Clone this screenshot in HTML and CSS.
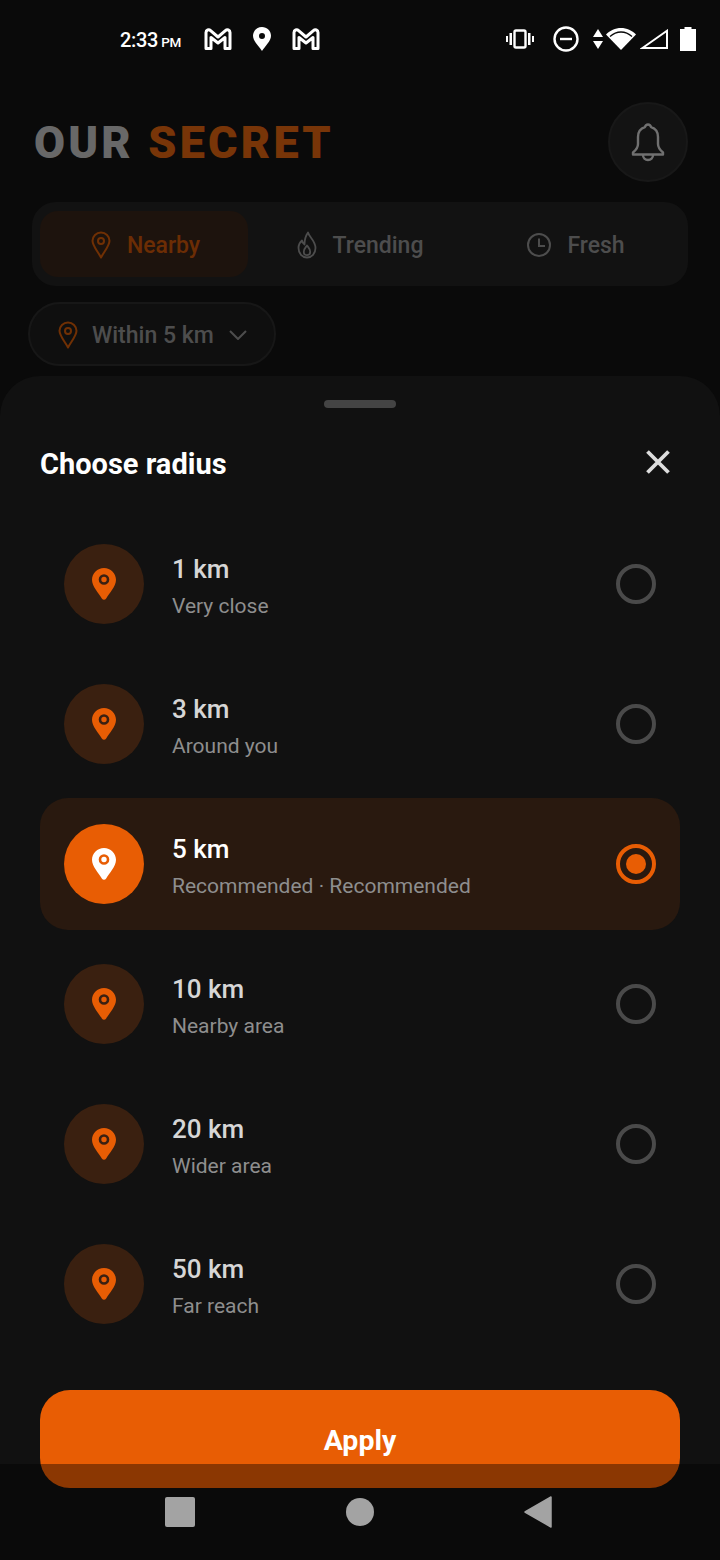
FILE: index.html
```html
<!DOCTYPE html>
<html lang="en">
<head>
  <meta charset="UTF-8" />
  <meta name="viewport" content="width=device-width, initial-scale=1.0" />
  <title>Choose radius</title>
  <link rel="stylesheet" href="styles.css">
</head>
<body>
  <svg class="defs" aria-hidden="true">
    <symbol id="pin-solid" viewBox="0 0 24 32">
      <path fill="currentColor" d="M12 0C5.400 0 0 5.200 0 11.800c0 6.600 6.600 13.400 10 18.900.9 1.500 3.100 1.500 4 0 3.400-5.500 10-12.300 10-18.900C24 5.200 18.600 0 12 0z"/>
      <circle cx="12" cy="11.500" r="4" fill="none" stroke="var(--ring)" stroke-width="2.600"/>
    </symbol>
    <symbol id="pin-line" viewBox="0 0 20 28">
      <path fill="none" stroke="currentColor" stroke-width="2" stroke-linejoin="round" d="M10 1.500c-4.700 0-8.500 3.700-8.500 8.300 0 5 5.400 10.800 8.500 16.700 3.100-5.900 8.500-11.700 8.500-16.700 0-4.600-3.800-8.300-8.500-8.300z"/>
      <circle cx="10" cy="10" r="3" fill="none" stroke="currentColor" stroke-width="2"/>
    </symbol>
    <symbol id="gmail" viewBox="0 0 28 22">
      <path fill="none" stroke="currentColor" stroke-width="3" stroke-linejoin="round" d="M2 4.500C2 2 4.800 1 6.600 2.600L14 9l7.400-6.400C23.200 1 26 2 26 4.500V20.500h-5V9.500L14 15 7 9.500v11H2z"/>
    </symbol>
  </svg>

  <div class="app">
    <div class="status">
      <div class="status-left">
        <span class="time">2:33<small>PM</small></span>
        <svg class="ic-gmail"><use href="#gmail"/></svg>
        <svg class="ic-loc" viewBox="0 0 18 24">
          <path fill="#fff" fill-rule="evenodd" d="M9 0C4 0 0 3.900 0 8.800 0 14 6 19.500 9 24c3-4.500 9-10 9-15.200C18 3.900 14 0 9 0zm0 6a3 3 0 1 1 0 6 3 3 0 0 1 0-6z"/>
        </svg>
        <svg class="ic-gmail"><use href="#gmail"/></svg>
      </div>
      <div class="status-right">
        <svg class="ic-vib" viewBox="0 0 28 20">
          <rect x="8.500" y="1.500" width="11" height="17" rx="1.500" fill="none" stroke="#fff" stroke-width="2.400"/>
          <path fill="#fff" d="M3.500 4h2.500v12H3.500zM22 4h2.500v12H22zM0 7h2v6H0zM26 7h2v6h-2z"/>
        </svg>
        <svg class="ic-dnd" viewBox="0 0 26 26">
          <circle cx="13" cy="13" r="11.500" fill="none" stroke="#fff" stroke-width="2.400"/>
          <rect x="7" y="11.800" width="12" height="2.400" fill="#fff"/>
        </svg>
        <svg class="ic-arrows" viewBox="0 0 10 20">
          <path fill="#fff" d="M5 0l5 8H0zM0 12h10l-5 8z"/>
        </svg>
        <svg class="ic-wifi" viewBox="0 0 30 22">
          <path fill="#fff" d="M15 22L0 6.500C4 2.500 9.200 0 15 0s11 2.500 15 6.500z"/>
          <path fill="none" stroke="#0a0a0a" stroke-width="1.300" d="M4 8.500C7.200 5.600 11 4 15 4s7.800 1.600 11 4.500"/>
        </svg>
        <svg class="ic-signal" viewBox="0 0 28 20">
          <path fill="none" stroke="#fff" stroke-width="2" d="M2.500 19L27 1.800V19z"/>
        </svg>
        <svg class="ic-batt" viewBox="0 0 16 24">
          <path fill="#fff" d="M4.500 0h7v2H16v22H0V2h4.500z"/>
        </svg>
      </div>
    </div>

    <div class="behind">
      <header class="top">
        <h1 class="logo">OUR <span>SECRET</span></h1>
        <div class="bell">
          <svg width="36" height="40" viewBox="0 0 36 40" fill="none" stroke="currentColor" stroke-width="2.400" stroke-linejoin="round">
            <path d="M18 2.500c-1.700 0-2.700 1.300-3 2.600C10.200 6.500 8 10.500 8 15v7c0 3.500-2 6-5 8.500V32.500h30V30.500c-3-2.500-5-5-5-8.500v-7c0-4.500-2.200-8.500-7-9.900-.3-1.300-1.300-2.600-3-2.600z"/>
            <path d="M13 33c0 3 2.200 5 5 5s5-2 5-5"/>
          </svg>
        </div>
      </header>

      <nav class="tabs">
        <div class="tab active">
          <svg class="ic-tab-pin"><use href="#pin-line"/></svg>
          Nearby
        </div>
        <div class="tab">
          <svg class="ic-flame" viewBox="0 0 20 28" fill="none" stroke="currentColor" stroke-width="1.800" stroke-linejoin="round">
            <path d="M11 1.500c1 4.500 7.500 8 7.500 15.500 0 5.500-3.800 9.500-8.500 9.500s-8.500-4-8.500-9.500c0-3.500 1.800-6 3.500-7.500.3 2 1 3 2.500 4C7.500 9 8.500 5 11 1.500z"/>
            <path d="M10 14.500c-1.500 2-3.200 3.700-3.200 6.200 0 2 1.400 3.500 3.200 3.500s3.200-1.500 3.200-3.500c0-2.500-1.700-4.200-3.200-6.200z"/>
          </svg>
          Trending
        </div>
        <div class="tab">
          <svg class="ic-clock" viewBox="0 0 24 24" fill="none" stroke="currentColor" stroke-width="2">
            <circle cx="12" cy="12" r="11"/>
            <path d="M12 5.500V13h6"/>
          </svg>
          Fresh
        </div>
      </nav>

      <div class="chip">
        <svg class="ic-chip-pin"><use href="#pin-line"/></svg>
        <span>Within 5 km</span>
        <svg class="ic-chev" viewBox="0 0 18 10" fill="none" stroke="currentColor" stroke-width="2">
          <path d="M1 1l8 8 8-8"/>
        </svg>
      </div>
    </div>

    <div class="scrim"></div>

    <section class="sheet">
      <div class="handle"></div>
      <div class="sheet-head">
        <h2>Choose radius</h2>
        <svg class="ic-close" viewBox="0 0 24 24" stroke="#ddd" stroke-width="3.800">
          <path d="M1.500 1.500l21 21M22.500 1.500l-21 21"/>
        </svg>
      </div>

      <div class="list">
        <div class="row">
          <div class="badge"><svg class="ic-pin"><use href="#pin-solid"/></svg></div>
          <div class="row-text"><div class="km">1 km</div><div class="sub">Very close</div></div>
          <div class="radio"></div>
        </div>
        <div class="row">
          <div class="badge"><svg class="ic-pin"><use href="#pin-solid"/></svg></div>
          <div class="row-text"><div class="km">3 km</div><div class="sub">Around you</div></div>
          <div class="radio"></div>
        </div>
        <div class="row selected">
          <div class="badge"><svg class="ic-pin"><use href="#pin-solid"/></svg></div>
          <div class="row-text"><div class="km">5 km</div><div class="sub">Recommended · Recommended</div></div>
          <div class="radio"></div>
        </div>
        <div class="row">
          <div class="badge"><svg class="ic-pin"><use href="#pin-solid"/></svg></div>
          <div class="row-text"><div class="km">10 km</div><div class="sub">Nearby area</div></div>
          <div class="radio"></div>
        </div>
        <div class="row">
          <div class="badge"><svg class="ic-pin"><use href="#pin-solid"/></svg></div>
          <div class="row-text"><div class="km">20 km</div><div class="sub">Wider area</div></div>
          <div class="radio"></div>
        </div>
        <div class="row">
          <div class="badge"><svg class="ic-pin"><use href="#pin-solid"/></svg></div>
          <div class="row-text"><div class="km">50 km</div><div class="sub">Far reach</div></div>
          <div class="radio"></div>
        </div>
      </div>

      <button class="apply">Apply</button>
    </section>

    <div class="navbar">
      <div class="nav-square"></div>
      <div class="nav-circle"></div>
      <svg class="nav-back" viewBox="0 0 28 32">
        <path fill="#a3a3a3" stroke="#a3a3a3" stroke-width="1.500" stroke-linejoin="round" d="M27 1v30L1 16z"/>
      </svg>
    </div>
  </div>
</body>
</html>
```

FILE: styles.css
```css
* {
  box-sizing: border-box;
}
html, body {
  margin: 0;
  padding: 0;
}
body {
  font-family: Roboto, "Noto Sans", sans-serif;
  background: #0a0a0a;
}
.defs {
  display: none;
}
.app {
  position: relative;
  width: 720px;
  height: 1560px;
  overflow: hidden;
  background: #141414;
}

/* status bar */
.status {
  position: relative;
  z-index: 2;
  height: 78px;
  display: flex;
  justify-content: space-between;
  align-items: center;
  padding: 0 24px 0 120px;
  color: #fff;
}
.status-left, .status-right {
  display: flex;
  align-items: center;
}
.time {
  width: 62px;
  margin: 2px 22px 0 0;
  font-size: 20px;
  font-weight: 500;
  letter-spacing: -0.3px;
  white-space: nowrap;
}
.time small {
  font-size: 13.500px;
  margin-left: 3px;
}
.ic-gmail {
  width: 28px;
  height: 22px;
}
.ic-loc {
  width: 18px;
  height: 24px;
  margin: 0 21px;
}
.ic-vib {
  width: 28px;
  height: 20px;
  margin-right: 19px;
}
.ic-dnd {
  width: 26px;
  height: 26px;
  margin-right: 14px;
}
.ic-arrows {
  width: 10px;
  height: 20px;
  margin-right: 3px;
}
.ic-wifi {
  width: 30px;
  height: 22px;
  margin-right: 4px;
}
.ic-signal {
  width: 28px;
  height: 20px;
  margin-right: 12px;
}
.ic-batt {
  width: 16px;
  height: 24px;
}

/* page behind the sheet */
.behind {
  padding: 24px 32px 0;
}
.top {
  display: flex;
  justify-content: space-between;
  align-items: center;
  height: 80px;
}
.logo {
  margin: 0 0 0 2px;
  font-size: 45px;
  font-weight: 900;
  letter-spacing: 3.200px;
  color: #d0d0d0;
}
.logo span {
  color: #f06a10;
}
.bell {
  width: 80px;
  height: 80px;
  border-radius: 50%;
  background: #262626;
  border: 2px solid #303030;
  color: #e0e0e0;
  display: flex;
  align-items: center;
  justify-content: center;
}
.tabs {
  margin-top: 20px;
  padding: 9px 8px;
  display: grid;
  grid-template-columns: repeat(3, 1fr);
  gap: 8px;
  background: #242424;
  border-radius: 24px;
}
.tab {
  height: 66px;
  padding-top: 2px;
  display: flex;
  align-items: center;
  justify-content: center;
  gap: 16px;
  font-size: 23px;
  font-weight: 500;
  color: #9a9a9a;
  border-radius: 18px;
}
.tab.active {
  padding-left: 3px;
  background: #3a261a;
  color: #d85a08;
}
.ic-tab-pin, .ic-chip-pin {
  width: 20px;
  height: 28px;
}
.ic-flame {
  width: 20px;
  height: 28px;
}
.ic-clock {
  width: 24px;
  height: 24px;
}
.chip {
  margin: 16px 0 0 -4px;
  width: 248px;
  height: 64px;
  padding: 2px 0 0 28px;
  display: flex;
  align-items: center;
  border: 2px solid #2e2e2e;
  border-radius: 32px;
  background: #1e1e1e;
  font-size: 23px;
  font-weight: 500;
  color: #9a9a9a;
}
.ic-chip-pin {
  color: #e06008;
  margin-right: 14px;
}
.ic-chev {
  width: 18px;
  height: 10px;
  margin-left: 15px;
}
.tab.active svg {
  color: #e06008;
}
.scrim {
  position: absolute;
  inset: 0;
  z-index: 1;
  background: rgba(0, 0, 0, 0.5);
}

/* bottom sheet */
.sheet {
  position: absolute;
  z-index: 1;
  left: 0;
  right: 0;
  top: 376px;
  bottom: 0;
  background: #111;
  border-radius: 40px 40px 0 0;
  padding: 24px 40px 0;
}
.handle {
  width: 72px;
  height: 8px;
  margin: 0 auto;
  border-radius: 4px;
  background: #444;
}
.sheet-head {
  margin-top: 32px;
  height: 48px;
  display: flex;
  justify-content: space-between;
  align-items: center;
}
.sheet-head h2 {
  margin: 0;
  font-size: 29px;
  font-weight: 700;
  color: #fff;
}
.ic-close {
  width: 24px;
  height: 24px;
  margin-right: 10px;
  margin-top: -4px;
}
.list {
  margin-top: 30px;
  display: flex;
  flex-direction: column;
  gap: 8px;
}
.row {
  height: 132px;
  padding: 0 24px;
  display: flex;
  align-items: center;
  border-radius: 28px;
  --ring: #3a2012;
}
.badge {
  width: 80px;
  height: 80px;
  border-radius: 50%;
  background: #3a2010;
  color: #e85d04;
  display: flex;
  align-items: center;
  justify-content: center;
  margin-right: 28px;
}
.ic-pin {
  width: 24px;
  height: 32px;
}
.row-text {
  flex: 1;
  padding-top: 5px;
}
.km {
  font-size: 26px;
  font-weight: 500;
  line-height: 34px;
  color: #d6d6d6;
}
.sub {
  margin-top: 5px;
  font-size: 21px;
  line-height: 30px;
  color: #8e8e8e;
}
.radio {
  width: 40px;
  height: 40px;
  border-radius: 50%;
  border: 4px solid #4a4a4a;
}
.row.selected {
  background: #29190f;
  --ring: #e85d04;
}
.row.selected .badge {
  background: #e85d04;
  color: #fff;
}
.row.selected .km {
  color: #fff;
}
.row.selected .radio {
  border-color: #e85d04;
  padding: 6px;
}
.row.selected .radio::after {
  content: "";
  display: block;
  width: 100%;
  height: 100%;
  border-radius: 50%;
  background: #e85d04;
}
.apply {
  display: block;
  width: 100%;
  height: 98px;
  margin-top: 40px;
  padding-top: 4px;
  border: none;
  border-radius: 30px;
  background: #e85d04;
  color: #fff;
  font-family: inherit;
  font-size: 28.500px;
  font-weight: 700;
}

/* android nav, drawn over the button */
.navbar {
  position: absolute;
  z-index: 2;
  left: 0;
  right: 0;
  bottom: 0;
  height: 96px;
  padding-right: 3px;
  display: flex;
  justify-content: center;
  align-items: center;
  gap: 150px;
  background: rgba(0, 0, 0, 0.4);
}
.nav-square {
  width: 30px;
  height: 30px;
  margin-right: 1px;
  border-radius: 2px;
  background: #a3a3a3;
}
.nav-circle {
  width: 28px;
  height: 28px;
  border-radius: 50%;
  background: #a3a3a3;
}
.nav-back {
  width: 28px;
  height: 32px;
}
```
